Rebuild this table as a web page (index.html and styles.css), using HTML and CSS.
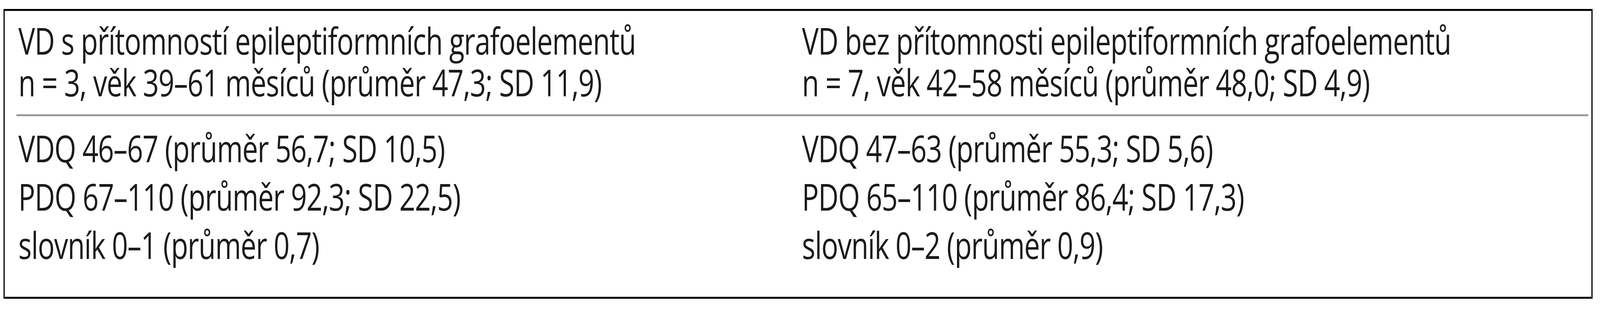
FILE: index.html
```html
<!DOCTYPE html>
<html lang="cs">
<head>
<meta charset="utf-8">
<title>Tabulka</title>
<link rel="stylesheet" href="styles.css">
<script src="script.js"></script>
</head>
<body>
<div class="table">
  <div class="row head">
    <div class="cell">
      <p class="text">VD s přítomností epileptiformních grafoelementů<br>n = 3, věk 39–61 měsíců (průměr 47,3; SD 11,9)</p>
    </div>
    <div class="cell">
      <p class="text">VD bez přítomnosti epileptiformních grafoelementů<br>n = 7, věk 42–58 měsíců (průměr 48,0; SD 4,9)</p>
    </div>
  </div>
  <div class="row body">
    <div class="cell">
      <p class="text">VDQ 46–67 (průměr 56,7; SD 10,5)<br>PDQ 67–110 (průměr 92,3; SD 22,5)<br>slovník 0–1 (průměr 0,7)</p>
    </div>
    <div class="cell">
      <p class="text">VDQ 47–63 (průměr 55,3; SD 5,6)<br>PDQ 65–110 (průměr 86,4; SD 17,3)<br>slovník 0–2 (průměr 0,9)</p>
    </div>
  </div>
</div>
</body>
</html>
```
FILE: styles.css
```css
:root {
  --px: calc(100vw / 5425);
  --py: calc(100vh / 800);
}
html, body {
  margin: 0;
  padding: 0;
  background: #ffffff;
  overflow: hidden;
}
body {
  padding: calc(23 * var(--py)) 0 0 calc(12 * var(--px));
  font-family: "Open Sans", "Noto Sans", sans-serif;
  color: #1a1a1a;
}
.table {
  box-sizing: border-box;
  width: calc(5388 * var(--px));
  height: calc(743 * var(--py));
  border-style: solid;
  border-color: #000;
  border-width: calc(5 * var(--py)) calc(5 * var(--px));
  padding: 0 calc(11 * var(--px)) 0 calc(40 * var(--px));
  display: flex;
  flex-direction: column;
}
.row {
  display: grid;
  grid-template-columns: calc(2657 * var(--px)) 1fr;
}
.cell {
  padding-left: calc(6 * var(--px));
  min-width: 0;
  font-size: calc(95 * var(--py));
  letter-spacing: calc(-1.7 * var(--py));
  white-space: nowrap;
}
.text {
  margin: 0;
  transform: scaleX(var(--sx, 1));
  transform-origin: 0 50%;
}
.head {
  padding: calc(22 * var(--py)) 0 calc(29 * var(--py));
  border-bottom: calc(5 * var(--py)) solid #9a9a9a;
}
.head .text {
  line-height: calc(107 * var(--py));
}
.body {
  padding-top: calc(19 * var(--py));
}
.body .text {
  line-height: calc(124 * var(--py));
}
```
FILE: script.js
```js
(function () {
  function fit() {
    var sx = (window.innerWidth / 5425) / (window.innerHeight / 800);
    document.documentElement.style.setProperty('--sx', String(sx));
  }
  fit();
  window.addEventListener('resize', fit);
})();
```
